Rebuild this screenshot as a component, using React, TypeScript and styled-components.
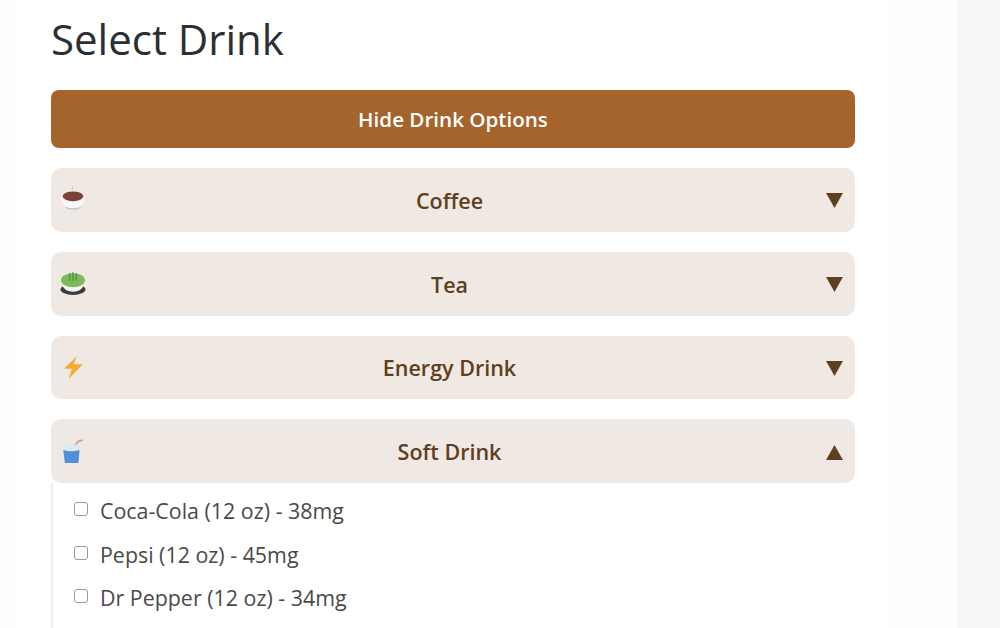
import React from 'react';
import styled, { createGlobalStyle } from 'styled-components';

const GlobalStyle = createGlobalStyle`
  html, body {
    margin: 0;
    height: 628px;
    overflow: hidden;
    background: #f7f8fa;
    font-family: 'Open Sans', 'Noto Sans', sans-serif;
  }
`;

const Page = styled.div`
  width: 957px;
  height: 628px;
  overflow: hidden;
  background: #fefefe;
  padding-left: 18px;
  box-sizing: border-box;
`;

const Card = styled.div`
  width: 867px;
  height: 628px;
  overflow: hidden;
  background: #ffffff;
  padding: 13px 30px 0 33px;
  box-sizing: border-box;
`;

const Title = styled.h2`
  margin: 0 0 25px;
  height: 52px;
  font-size: 42px;
  line-height: 52px;
  font-weight: 400;
  color: #2b2f33;
`;

const ToggleButton = styled.button`
  display: block;
  width: 100%;
  height: 58px;
  margin-bottom: 20px;
  border: none;
  border-radius: 8px;
  background: #a5642c;
  color: #fff;
  font-family: inherit;
  font-size: 20.6px;
  font-weight: 600;
`;

const Group = styled.div<{ $tight?: boolean }>`
  margin-bottom: ${({ $tight }) => ($tight ? '0' : '20px')};
`;

const Header = styled.div`
  display: grid;
  grid-template-columns: 36px 1fr 36px;
  align-items: center;
  height: 63.75px;
  padding: 0 11px 0 9px;
  box-sizing: border-box;
  border-radius: 10px;
  background: #efe8e3;
  color: #5e3f20;
`;

const IconSlot = styled.span`
  display: flex;
  align-items: center;
  height: 26px;
  margin-top: -1px;
`;

const HeaderLabel = styled.span`
  text-align: center;
  font-size: 21.5px;
  font-weight: 600;
  margin: 1px 5px 0 0;
`;

const Arrow = styled.svg`
  justify-self: end;
  width: 17px;
  height: 15px;
  margin: 2px 1px 0 0;
  fill: #5e3f20;
`;

const Options = styled.ul`
  list-style: none;
  margin: 0;
  height: 150px;
  padding: 6px 0 0 21px;
  border-left: 2px solid #f0f0f0;
`;

const Option = styled.li`
  display: flex;
  align-items: center;
  gap: 12px;
  height: 43.5px;
  font-size: 21.4px;
  color: #4a4a4a;
`;

const Box = styled.span`
  flex: none;
  width: 12px;
  height: 12px;
  margin-top: -3px;
  border: 1.5px solid #9a9a9a;
  border-radius: 3px;
  background: #fff;
`;

const CoffeeIcon = () => (
  <svg width="26" height="26" viewBox="0 0 24 24">
    <path d="M12 1c-1 1-1 2 0 4" stroke="#d9c4bc" strokeWidth="1.2" fill="none" />
    <path d="M1 10c0 7 4.500 11 11 11s11-4 11-11z" fill="#f8f6f6" />
    <ellipse cx="12" cy="9.500" rx="11" ry="5.500" fill="#f1eeee" />
    <ellipse cx="12" cy="9.500" rx="9.500" ry="4.500" fill="#7c4238" />
    <path d="M4 19c2 2.500 5 3 8 3s6-.5 8-3c-2 1-5 1.500-8 1.500S6 20 4 19z" fill="#bcc6d2" />
  </svg>
);

const TeaIcon = () => (
  <svg width="26" height="26" viewBox="0 0 24 24">
    <ellipse cx="12" cy="18" rx="11.500" ry="5" fill="#3a3c3e" />
    <path d="M1.500 10c0 7 4.500 10 10.500 10s10.500-3 10.500-10z" fill="#f4f7f2" />
    <ellipse cx="12" cy="9.500" rx="11" ry="6.500" fill="#7dba5a" />
    <path d="M9 3v7M12 2v8M15 3v7" stroke="#559a44" strokeWidth="1.500" fill="none" />
  </svg>
);

const BoltIcon = () => (
  <svg width="26" height="26" viewBox="0 0 24 24">
    <path d="M15.500 2 3.500 13.500h7.500L8 23l13-13.500h-8.500z" fill="#f8a93a" />
  </svg>
);

const CupIcon = () => (
  <svg width="26" height="26" viewBox="0 0 24 24">
    <path d="m12 9 5-6 4-1" stroke="#d79aa2" strokeWidth="1.800" fill="none" />
    <path d="M2.500 6h16L17 23H4.500z" fill="#dfe9f2" />
    <path d="M3 11c5 1.500 10 1.500 15 0l-1 12H4.500z" fill="#4f91d8" />
  </svg>
);

const drinks = [
  { name: 'Coffee', icon: <CoffeeIcon /> },
  { name: 'Tea', icon: <TeaIcon /> },
  { name: 'Energy Drink', icon: <BoltIcon /> },
  { name: 'Soft Drink', icon: <CupIcon />, open: true },
];

const softDrinks = ['Coca-Cola (12 oz) - 38mg', 'Pepsi (12 oz) - 45mg', 'Dr Pepper (12 oz) - 34mg'];

export default function App() {
  return (
    <Page>
      <GlobalStyle />
      <Card>
        <Title>Select Drink</Title>
        <ToggleButton>Hide Drink Options</ToggleButton>
        {drinks.map((drink) => (
          <Group key={drink.name} $tight={drink.open}>
            <Header>
              <IconSlot>{drink.icon}</IconSlot>
              <HeaderLabel>{drink.name}</HeaderLabel>
              <Arrow viewBox="0 0 18 16">
                <path d={drink.open ? 'M9 0l9 16H0z' : 'M0 0h18L9 16z'} />
              </Arrow>
            </Header>
          </Group>
        ))}
        <Options>
          {softDrinks.map((item) => (
            <Option key={item}>
              <Box />
              {item}
            </Option>
          ))}
        </Options>
      </Card>
    </Page>
  );
}
